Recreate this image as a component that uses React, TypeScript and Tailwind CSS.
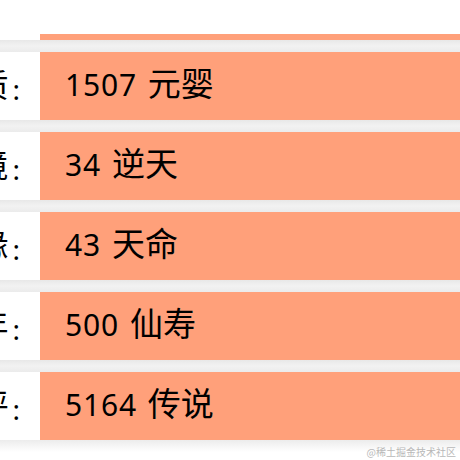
const rows = [
  { label: "资质", num: "1507", rank: "元婴" },
  { label: "心境", num: "34", rank: "逆天" },
  { label: "福缘", num: "43", rank: "天命" },
  { label: "寿年", num: "500", rank: "仙寿" },
  { label: "总评", num: "5164", rank: "传说" },
];

const cjk = { fontFamily: '"Noto Sans CJK SC", sans-serif' };
const latin = { fontFamily: '"Noto Sans", "Noto Sans CJK SC", sans-serif' };

function Gap() {
  return <div className="h-[12px] bg-gradient-to-b from-[#e8e8e8] via-[#f2f2f2] to-[#ebebeb]" />;
}

export default function App() {
  return (
    <div className="relative w-[460px] h-[460px] overflow-hidden bg-white text-black" style={latin}>
      <div className="h-[34px] bg-white" />
      <div className="flex h-[6px]">
        <div className="w-[40px] bg-white" />
        <div className="flex-1 bg-[#ffa07a]" />
      </div>
      {rows.map((r, i) => (
        <div key={r.label}>
          <Gap />
          <div className="flex h-[68px]">
            <div className="w-[40px] shrink-0 bg-white overflow-hidden flex justify-end items-center pb-[6px]">
              <div className="flex items-baseline whitespace-nowrap mr-[20px] leading-none">
                <span className="text-[32px]" style={cjk}>{r.label}</span>
                <span className="text-[28px] ml-[4px] relative top-[3px]" style={latin}>:</span>
              </div>
            </div>
            <div className="flex-1 bg-[#ffa07a] flex items-center pl-[25px] pb-[6px]">
              <div className="flex items-baseline whitespace-nowrap leading-none">
                <span className="text-[30px] tracking-[0.8px]" style={latin}>{r.num}</span>
                <span className="text-[33px] ml-[11px]" style={cjk}>{r.rank}</span>
              </div>
            </div>
          </div>
          {i === rows.length - 1 && (
            <div className="h-[12px] bg-gradient-to-b from-[#ececec] to-white" />
          )}
        </div>
      ))}
      <div className="absolute right-[4px] bottom-[3px] text-[10px] leading-none text-[#b8b8b8]" style={cjk}>
        @稀土掘金技术社区
      </div>
    </div>
  );
}
